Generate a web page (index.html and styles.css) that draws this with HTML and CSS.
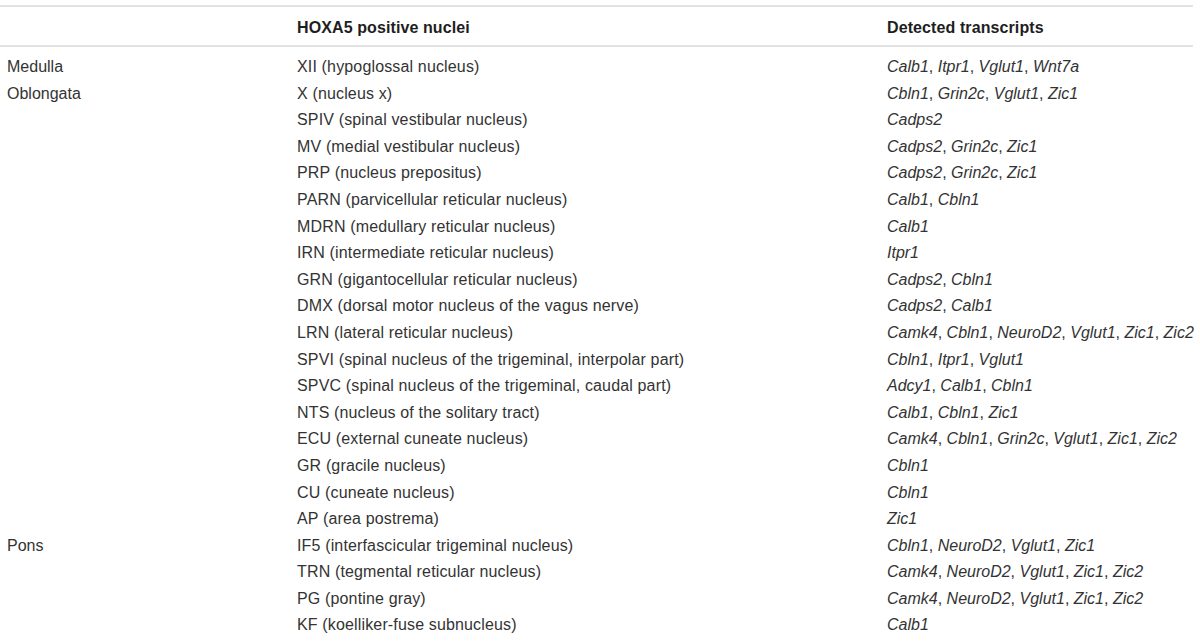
FILE: index.html
```html
<!DOCTYPE html>
<html>
<head>
<meta charset="utf-8">
<link rel="stylesheet" href="styles.css">
</head>
<body>
<table class="tbl">
  <colgroup><col class="c1"><col class="c2"><col class="c3"></colgroup>
  <thead>
    <tr><th></th><th>HOXA5 positive nuclei</th><th>Detected transcripts</th></tr>
  </thead>
  <tbody>
    <tr class="first"><td>Medulla</td><td>XII (hypoglossal nucleus)</td><td><i>Calb1</i>, <i>Itpr1</i>, <i>Vglut1</i>, <i>Wnt7a</i></td></tr>
    <tr><td>Oblongata</td><td>X (nucleus x)</td><td><i>Cbln1</i>, <i>Grin2c</i>, <i>Vglut1</i>, <i>Zic1</i></td></tr>
    <tr><td></td><td>SPIV (spinal vestibular nucleus)</td><td><i>Cadps2</i></td></tr>
    <tr><td></td><td>MV (medial vestibular nucleus)</td><td><i>Cadps2</i>, <i>Grin2c</i>, <i>Zic1</i></td></tr>
    <tr><td></td><td>PRP (nucleus prepositus)</td><td><i>Cadps2</i>, <i>Grin2c</i>, <i>Zic1</i></td></tr>
    <tr><td></td><td>PARN (parvicellular reticular nucleus)</td><td><i>Calb1</i>, <i>Cbln1</i></td></tr>
    <tr><td></td><td>MDRN (medullary reticular nucleus)</td><td><i>Calb1</i></td></tr>
    <tr><td></td><td>IRN (intermediate reticular nucleus)</td><td><i>Itpr1</i></td></tr>
    <tr><td></td><td>GRN (gigantocellular reticular nucleus)</td><td><i>Cadps2</i>, <i>Cbln1</i></td></tr>
    <tr><td></td><td>DMX (dorsal motor nucleus of the vagus nerve)</td><td><i>Cadps2</i>, <i>Calb1</i></td></tr>
    <tr><td></td><td>LRN (lateral reticular nucleus)</td><td><i>Camk4</i>, <i>Cbln1</i>, <i>NeuroD2</i>, <i>Vglut1</i>, <i>Zic1</i>, <i>Zic2</i></td></tr>
    <tr><td></td><td>SPVI (spinal nucleus of the trigeminal, interpolar part)</td><td><i>Cbln1</i>, <i>Itpr1</i>, <i>Vglut1</i></td></tr>
    <tr><td></td><td>SPVC (spinal nucleus of the trigeminal, caudal part)</td><td><i>Adcy1</i>, <i>Calb1</i>, <i>Cbln1</i></td></tr>
    <tr><td></td><td>NTS (nucleus of the solitary tract)</td><td><i>Calb1</i>, <i>Cbln1</i>, <i>Zic1</i></td></tr>
    <tr><td></td><td>ECU (external cuneate nucleus)</td><td><i>Camk4</i>, <i>Cbln1</i>, <i>Grin2c</i>, <i>Vglut1</i>, <i>Zic1</i>, <i>Zic2</i></td></tr>
    <tr><td></td><td>GR (gracile nucleus)</td><td><i>Cbln1</i></td></tr>
    <tr><td></td><td>CU (cuneate nucleus)</td><td><i>Cbln1</i></td></tr>
    <tr><td></td><td>AP (area postrema)</td><td><i>Zic1</i></td></tr>
    <tr><td>Pons</td><td>IF5 (interfascicular trigeminal nucleus)</td><td><i>Cbln1</i>, <i>NeuroD2</i>, <i>Vglut1</i>, <i>Zic1</i></td></tr>
    <tr><td></td><td>TRN (tegmental reticular nucleus)</td><td><i>Camk4</i>, <i>NeuroD2</i>, <i>Vglut1</i>, <i>Zic1</i>, <i>Zic2</i></td></tr>
    <tr><td></td><td>PG (pontine gray)</td><td><i>Camk4</i>, <i>NeuroD2</i>, <i>Vglut1</i>, <i>Zic1</i>, <i>Zic2</i></td></tr>
    <tr><td></td><td>KF (koelliker-fuse subnucleus)</td><td><i>Calb1</i></td></tr>
  </tbody>
</table>
</body>
</html>
```
FILE: styles.css
```css
html, body {
  margin: 0;
  padding: 0;
  background: #ffffff;
}
body {
  font-family: "Liberation Sans", Arial, sans-serif;
  color: #333333;
  font-size: 16px;
}
.tbl {
  margin-top: 5px;
  width: 1193px;
  border-collapse: collapse;
  table-layout: fixed;
}
.c1 { width: 297px; }
.c2 { width: 590px; }
.c3 { width: 306px; }
.tbl thead tr {
  border-top: 2px solid #e2e2e2;
  border-bottom: 2px solid #e2e2e2;
}
.tbl th {
  text-align: left;
  font-weight: bold;
  color: #1e1e1e;
  padding: 3px 0 0 0;
  height: 35px;
  line-height: 35px;
  white-space: nowrap;
  letter-spacing: 0.1px;
}
.tbl td {
  padding: 0;
  height: 26.6px;
  line-height: 26.6px;
  white-space: nowrap;
  vertical-align: middle;
}
.tbl td:nth-child(2) {
  letter-spacing: 0.15px;
}
.tbl th:first-child, .tbl td:first-child {
  padding-left: 7px;
}
.tbl tbody tr.first td {
  padding-top: 7px;
}
.tbl i {
  font-style: italic;
}
```
